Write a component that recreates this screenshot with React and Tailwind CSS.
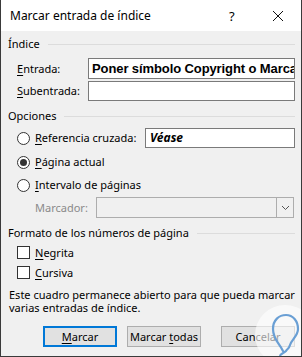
import React from "react";

const U = ({ children }) => <span className="underline underline-offset-2">{children}</span>;

function Header({ title, className = "" }) {
  return (
    <div className={`flex items-center h-[16px] ${className}`}>
      <span className="text-black whitespace-nowrap">{title}</span>
      <div className="flex-1 ml-[8px] h-px bg-[#dcdcdc]" />
    </div>
  );
}

function Radio({ checked }) {
  return (
    <div className="w-[13px] h-[13px] rounded-full border border-[#333] bg-white flex items-center justify-center shrink-0">
      {checked && <div className="w-[7px] h-[7px] rounded-full bg-[#333]" />}
    </div>
  );
}

function Check() {
  return <div className="w-[13px] h-[13px] border border-[#333] bg-white shrink-0" />;
}

export default function App() {
  return (
    <div
      className="w-[302px] h-[357px] bg-[#f0f0f0] border-x border-b border-[#3a3a3a] text-[11px] leading-[16px] text-black overflow-hidden relative"
      style={{ fontFamily: '"Noto Sans", sans-serif' }}
    >
      <div className="h-[31px] bg-white flex items-center pl-[9px] text-[12px]">
        <span className="flex-1">Marcar entrada de índice</span>
        <span className="w-[10px] mr-[33px] text-[13px]">?</span>
        <svg width="12" height="12" viewBox="0 0 12 12" className="mr-[17px]">
          <path d="M1 1 L11 11 M11 1 L1 11" stroke="#111" strokeWidth="1" />
        </svg>
      </div>

      <div className="pl-[7px] pr-[6px]">
        <Header title="Índice" className="mt-[5px]" />

        <div className="flex items-center mt-[6px] h-[21px]">
          <span className="w-[80px] pl-[9px] whitespace-nowrap"><U>E</U>ntrada:</span>
          <div className="flex-1 h-[21px] border border-[#7a7a7a] bg-white overflow-hidden whitespace-nowrap pl-[3px] font-bold text-[13px] leading-[19px] tracking-[-0.1px]" style={{ fontFamily: '"Liberation Sans", sans-serif' }}>
            Poner símbolo Copyright o Marca registrada
          </div>
        </div>

        <div className="flex items-center mt-[2px] h-[20px]">
          <span className="w-[80px] pl-[9px] whitespace-nowrap"><U>S</U>ubentrada:</span>
          <div className="flex-1 h-[20px] border border-[#7a7a7a] bg-white" />
        </div>

        <Header title="Opciones" className="mt-[7px]" />

        <div className="flex items-center mt-[4px] h-[20px]">
          <div className="pl-[9px] flex items-center gap-[5px] w-[137px] whitespace-nowrap">
            <Radio />
            <span><U>R</U>eferencia cruzada:</span>
          </div>
          <div className="flex-1 h-[20px] border border-[#7a7a7a] bg-white pl-[4px] font-bold italic text-[12px] leading-[18px]">
            Véase
          </div>
        </div>

        <div className="flex items-center mt-[4px] h-[20px] pl-[9px] gap-[5px]">
          <Radio checked />
          <span><U>P</U>ágina actual</span>
        </div>

        <div className="flex items-center mt-[3px] h-[20px] pl-[9px] gap-[5px]">
          <Radio />
          <span><U>I</U>ntervalo de páginas</span>
        </div>

        <div className="flex items-center mt-[2px] h-[21px]">
          <span className="w-[88px] pl-[27px] text-[#8a8a8a]">Marcador:</span>
          <div className="flex-1 h-[21px] border border-[#adadad] bg-[#f0f0f0] flex mr-[1px]">
            <div className="flex-1" />
            <div className="w-[17px] border-l border-[#adadad] flex items-center justify-center">
              <svg width="9" height="6" viewBox="0 0 9 6">
                <path d="M1 1 L4.5 4.5 L8 1" stroke="#555" fill="none" strokeWidth="1" />
              </svg>
            </div>
          </div>
        </div>

        <Header title="Formato de los números de página" className="mt-[7px]" />

        <div className="flex items-center mt-[5px] h-[13px] pl-[9px] gap-[5px]">
          <Check />
          <span><U>N</U>egrita</span>
        </div>
        <div className="flex items-center mt-[7px] h-[13px] pl-[9px] gap-[5px]">
          <Check />
          <span><U>C</U>ursiva</span>
        </div>

        <p className="mt-[9px] leading-[13px] pl-[1px]">
          Este cuadro permanece abierto para que pueda marcar varias entradas de índice.
        </p>

        <div className="flex mt-[12px] pl-[35px] gap-[10px]">
          <button className="shrink-0 whitespace-nowrap w-[74px] h-[21px] border-2 border-[#0078d7] bg-[#e1e1e1] text-[11px] leading-[16px]"><U>M</U>arcar</button>
          <button className="shrink-0 whitespace-nowrap w-[74px] h-[21px] border border-[#adadad] bg-[#e1e1e1] text-[11px] leading-[16px]">Marcar <U>t</U>odas</button>
          <button className="shrink-0 whitespace-nowrap ml-[10px] w-[74px] h-[21px] border border-[#adadad] bg-[#e1e1e1] text-[11px] leading-[16px]">Cancelar</button>
        </div>
      </div>

      <svg className="absolute left-[252px] top-[303px] pointer-events-none" width="64" height="64" viewBox="0 0 64 64">
        <circle cx="32" cy="32" r="30" fill="white" fillOpacity="0.6" />
        <path d="M30 48 C26 40 20 36 20 26 C20 17 26 12 33 12 C40 12 45 18 45 26 C45 33 39 36 37 42 C36 46 34 46 33 48 C31 50 27 51 27 53 C27 55 32 55 33 56" stroke="#6a9fd4" strokeWidth="2.2" fill="none" strokeLinecap="round" />
      </svg>
    </div>
  );
}
